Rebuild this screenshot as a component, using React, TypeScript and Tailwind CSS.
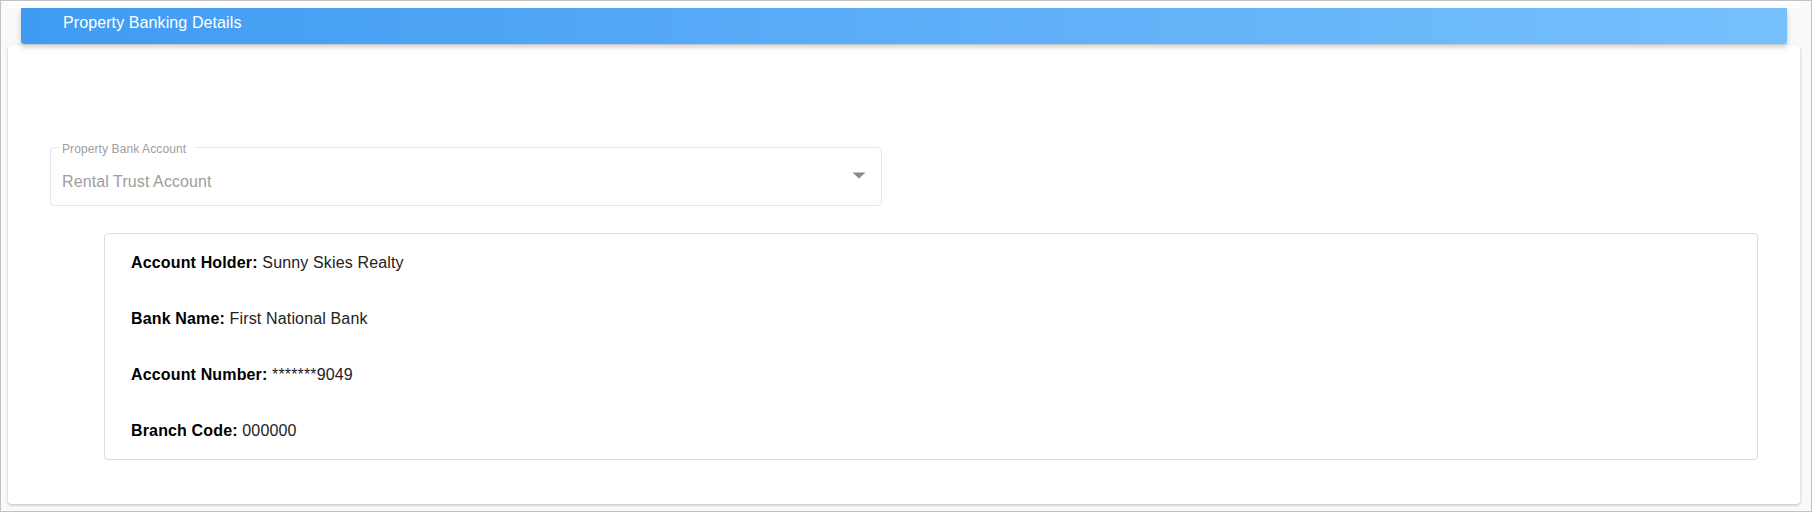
import { ChevronDown } from "lucide-react";

const details = [
  { label: "Account Holder:", value: "Sunny Skies Realty" },
  { label: "Bank Name:", value: "First National Bank" },
  { label: "Account Number:", value: "*******9049" },
  { label: "Branch Code:", value: "000000" },
];

function BankAccountSelect() {
  return (
    <div className="relative h-[59px] w-[832px] rounded-[4px] border border-[#e6e6e6]">
      <span className="absolute left-[9px] top-[-5px] bg-white pl-[2px] pr-[9px] text-[12px] leading-[12px] tracking-[0.1px] text-[#9e9e9e]">
        Property Bank Account
      </span>
      <div className="pl-[11px] pt-[22px] text-[16px] leading-[24px] tracking-[0.1px] text-[#9e9e9e]">
        Rental Trust Account
      </div>
      <svg
        className="absolute right-[15px] top-[24px]"
        width="14"
        height="7"
        viewBox="0 0 14 7"
        aria-hidden="true"
      >
        <path d="M0.5 0.5h13L7 6.5z" fill="#8a8a8a" />
      </svg>
    </div>
  );
}

export default function App() {
  return (
    <div
      className="flex h-[512px] w-[1812px] flex-col border border-[#c2c2c2] bg-[#f8f9fb] pl-[7px] pr-[11px]"
      style={{ fontFamily: '"Liberation Sans", Arial, sans-serif' }}
    >
      <div className="h-[7px] bg-white" />
      <div className="relative z-10 mx-[13px] h-[36px] rounded-b-[3px] bg-gradient-to-r from-[#3f9bf2] to-[#76c0fd] pl-[42px] pt-[3px] text-[16px] leading-[24px] tracking-[0.1px] text-white shadow-[0_3px_5px_rgba(0,0,0,0.2)]">
        Property Banking Details
      </div>
      <section className="mt-px flex h-[459px] flex-col rounded-[4px] bg-white shadow-[0_1px_3px_rgba(0,0,0,0.25)]">
        <div className="pl-[42px] pt-[102px]">
          <BankAccountSelect />
        </div>
        <div className="ml-[96px] mr-[42px] mt-[27px] flex h-[227px] flex-col gap-[32px] rounded-[4px] border border-[#dcdcdc] pl-[26px] pt-[17px]">
          {details.map((row) => (
            <p key={row.label} className="text-[16px] leading-[24px] tracking-[0.15px] text-[#222]">
              <span className="font-bold text-black">{row.label}</span> {row.value}
            </p>
          ))}
        </div>
      </section>
    </div>
  );
}
